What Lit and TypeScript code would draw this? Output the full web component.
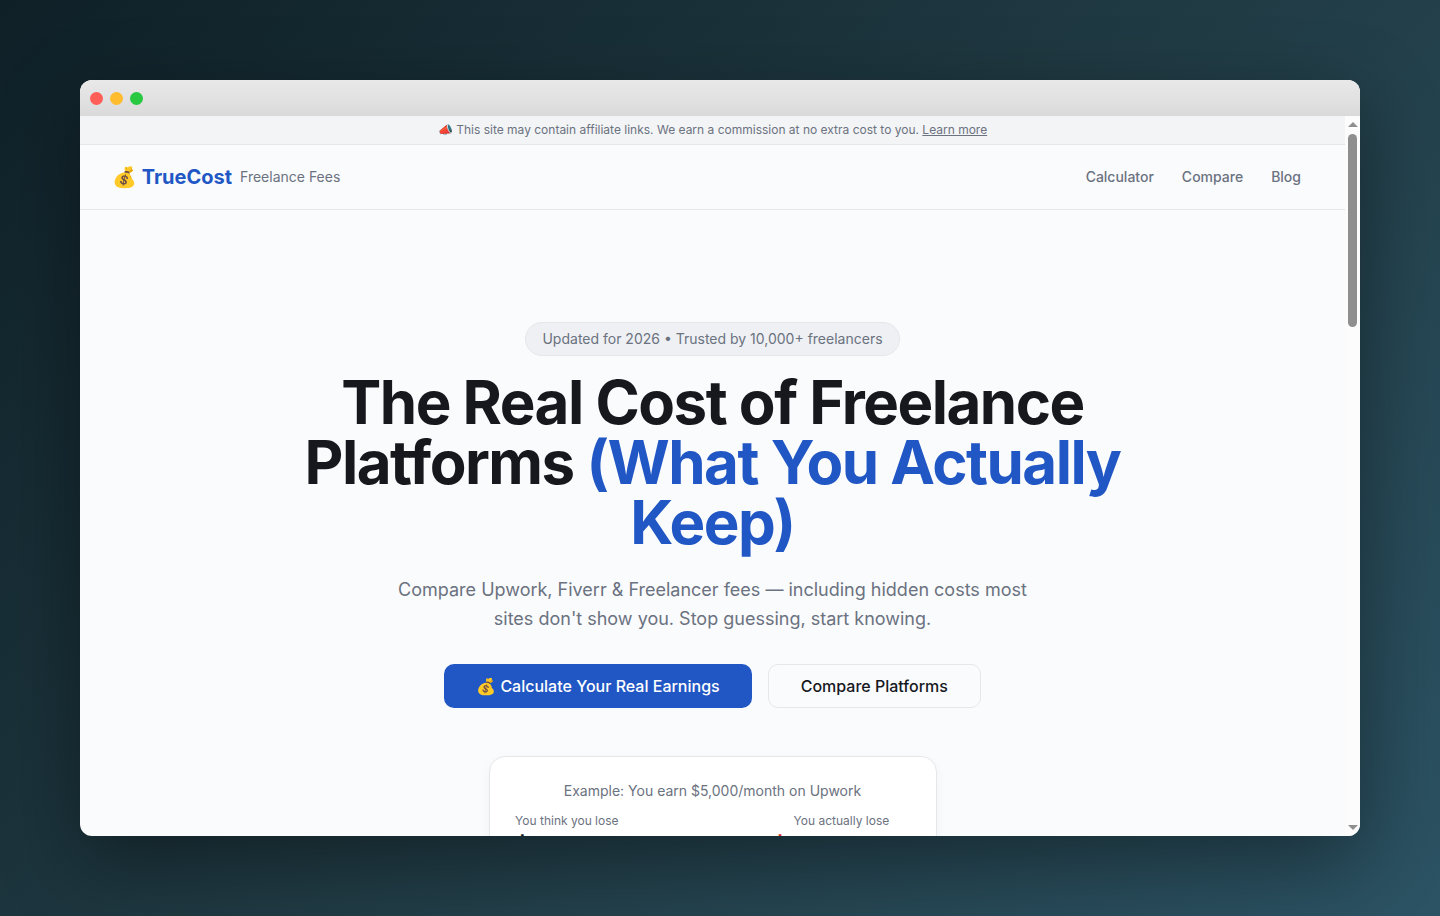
import { LitElement, html, css } from "lit";
import { customElement } from "lit/decorators.js";

@customElement("app-root")
export class AppRoot extends LitElement {
  static styles = css`
    :host {
      display: block;
      font-family: Inter, "Liberation Sans", sans-serif;
      color: #16181d;
    }
    * { box-sizing: border-box; }
    .desktop {
      height: 916px;
      padding: 80px;
      background: linear-gradient(135deg, #0f2027, #203a43, #2c5364);
      overflow: hidden;
    }
    .window {
      height: 756px;
      border-radius: 12px;
      overflow: hidden;
      display: flex;
      flex-direction: column;
      background: #fafbfd;
      box-shadow: 0 25px 80px rgba(0, 0, 0, 0.4);
    }
    .titlebar {
      flex: none;
      height: 36px;
      display: flex;
      align-items: center;
      gap: 7px;
      padding-left: 10px;
      background: linear-gradient(180deg, #e9e9e9, #dadada);
    }
    .dot { width: 13px; height: 13px; border-radius: 50%; }
    .red { background: #ff5f57; }
    .yellow { background: #febc2e; }
    .green { background: #28c840; }
    .viewport {
      flex: 1;
      min-height: 0;
      display: flex;
    }
    .page {
      flex: 1;
      min-width: 0;
      overflow: hidden;
    }
    .scrollbar {
      flex: none;
      width: 15px;
      display: flex;
      flex-direction: column;
      align-items: center;
      background: #fcfcfd;
    }
    .arrow {
      flex: none;
      width: 0;
      height: 0;
      border-left: 5px solid transparent;
      border-right: 5px solid transparent;
    }
    .arrow.up { margin-top: 6px; border-bottom: 5px solid #8f8f8f; }
    .arrow.down { margin-top: auto; margin-bottom: 6px; border-top: 5px solid #8f8f8f; }
    .thumb {
      flex: none;
      width: 9px;
      height: 193px;
      margin-top: 7px;
      border-radius: 5px;
      background: #8f8f8f;
    }
    .notice {
      height: 29px;
      padding-bottom: 2px;
      display: flex;
      align-items: center;
      justify-content: center;
      background: #f3f4f6;
      border-bottom: 1px solid #e5e7eb;
      font-size: 12px;
      color: #6b7280;
    }
    .notice a { color: #6b7280; text-decoration: underline; }
    .nav {
      height: 65px;
      padding: 0 44px 2px 32px;
      display: flex;
      align-items: center;
      justify-content: space-between;
      border-bottom: 1px solid #e5e7eb;
    }
    .brand { display: flex; align-items: center; gap: 8px; }
    .logo { padding-top: 2px; font-size: 20px; font-weight: 700; color: #2157c4; }
    .tag { font-size: 14px; color: #6b7280; }
    .links { display: flex; gap: 28px; font-size: 14px; font-weight: 500; color: #6b7280; }
    .hero {
      display: flex;
      flex-direction: column;
      align-items: center;
      text-align: center;
      padding-top: 112px;
    }
    .badge {
      height: 34px;
      padding: 0 16px 2px;
      display: flex;
      align-items: center;
      border: 1px solid #e5e7eb;
      border-radius: 17px;
      background: #eef0f3;
      font-size: 14px;
      color: #6b7280;
    }
    h1 {
      margin: 16px 0 0;
      width: 900px;
      font-size: 60px;
      line-height: 60px;
      font-weight: 700;
      letter-spacing: -1.5px;
      color: #16181d;
    }
    h1 span { color: #2157c4; }
    .sub {
      margin: 24px 0 0;
      width: 640px;
      font-size: 18px;
      line-height: 28.8px;
      color: #6b7280;
    }
    .actions { display: flex; gap: 16px; margin-top: 30px; }
    .btn {
      height: 44px;
      padding: 0 32px;
      display: flex;
      align-items: center;
      border-radius: 10px;
      font-size: 16px;
      font-weight: 500;
    }
    .primary { background: #2157c4; color: #fff; }
    .secondary { background: #fafbfd; color: #16181d; border: 1px solid #e5e7eb; }
    .card {
      margin-top: 48px;
      width: 448px;
      padding: 24px 18px;
      background: #fff;
      border: 1px solid #e5e7eb;
      border-radius: 16px;
      box-shadow: 0 4px 12px rgba(0, 0, 0, 0.04);
    }
    .card-title { font-size: 14px; color: #6b7280; line-height: 20px; }
    .cols { display: flex; justify-content: space-between; margin-top: 12px; text-align: center; }
    .col-label { font-size: 12px; color: #6b7280; line-height: 16px; }
    .col-value { font-size: 44px; font-weight: 800; line-height: 50px; }
    .bad { color: #dc2626; }
  `;

  render() {
    return html`
      <div class="desktop">
        <div class="window">
          <div class="titlebar">
            <div class="dot red"></div>
            <div class="dot yellow"></div>
            <div class="dot green"></div>
          </div>
          <div class="viewport">
            <div class="page">
              <div class="notice">
                <span>📣 This site may contain affiliate links. We earn a commission at no extra cost to you. <a href="#">Learn more</a></span>
              </div>
              <div class="nav">
                <div class="brand">
                  <div class="logo">💰 TrueCost</div>
                  <span class="tag">Freelance Fees</span>
                </div>
                <div class="links"><span>Calculator</span><span>Compare</span><span>Blog</span></div>
              </div>
              <div class="hero">
                <div class="badge">Updated for 2026 • Trusted by 10,000+ freelancers</div>
                <h1>The Real Cost of Freelance Platforms <span>(What You Actually Keep)</span></h1>
                <p class="sub">Compare Upwork, Fiverr &amp; Freelancer fees — including hidden costs most sites don't show you. Stop guessing, start knowing.</p>
                <div class="actions">
                  <div class="btn primary">💰 Calculate Your Real Earnings</div>
                  <div class="btn secondary">Compare Platforms</div>
                </div>
                <div class="card">
                  <div class="card-title">Example: You earn $5,000/month on Upwork</div>
                  <div class="cols">
                    <div>
                      <div class="col-label">You think you lose</div>
                      <div class="col-value">$500</div>
                    </div>
                    <div>
                      <div class="col-label">You actually lose</div>
                      <div class="col-value bad">$1,050</div>
                    </div>
                  </div>
                </div>
              </div>
            </div>
            <div class="scrollbar">
              <div class="arrow up"></div>
              <div class="thumb"></div>
              <div class="arrow down"></div>
            </div>
          </div>
        </div>
      </div>
    `;
  }
}
